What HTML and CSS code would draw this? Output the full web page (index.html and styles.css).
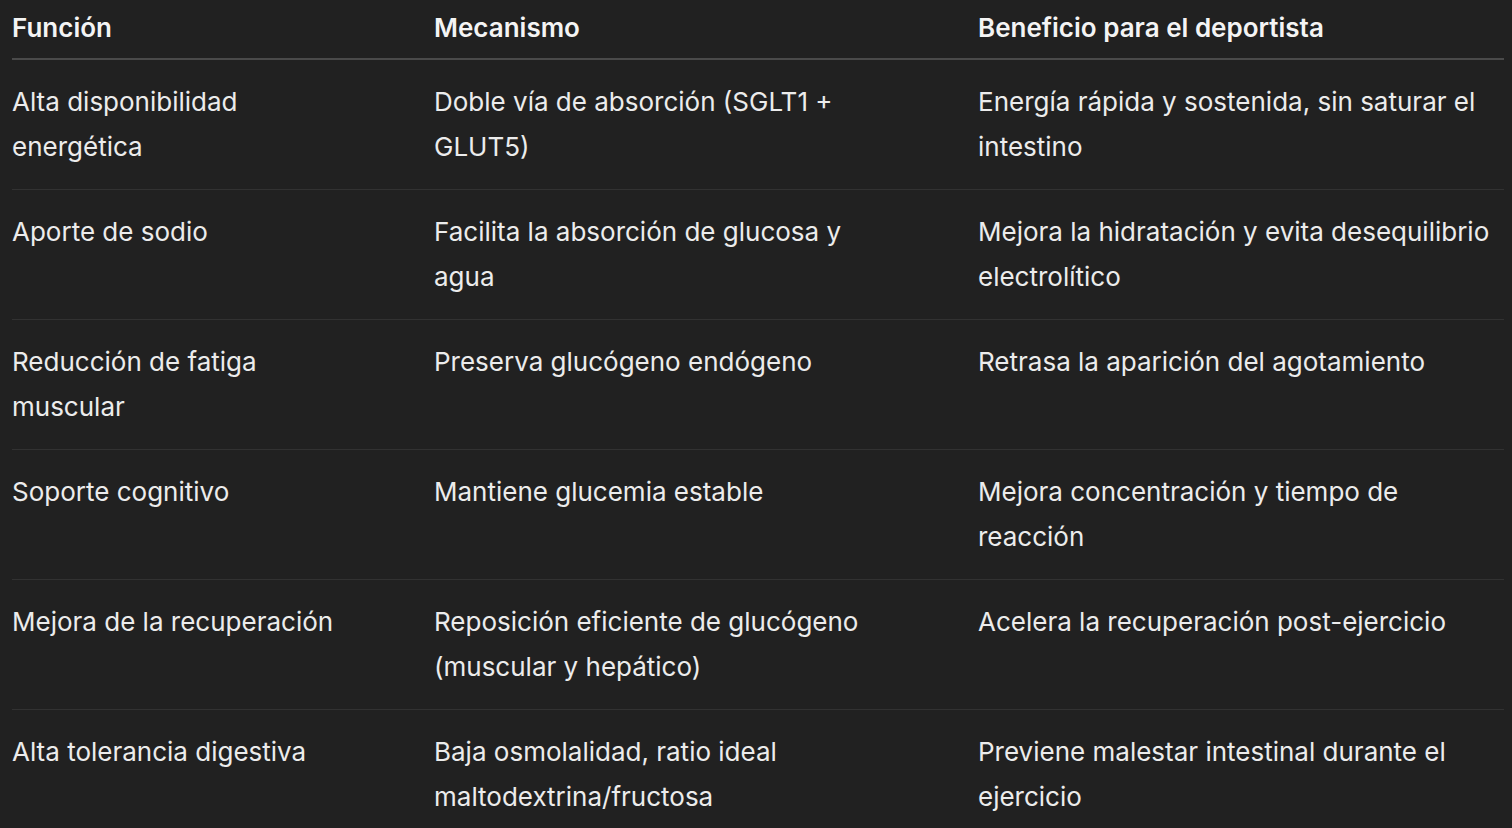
FILE: index.html
```html
<!DOCTYPE html>
<html lang="es">
<head>
    <meta charset="UTF-8">
    <meta name="viewport" content="width=device-width, initial-scale=1.0">
    <title>Funciones</title>
    <link rel="stylesheet" href="styles.css">
</head>
<body>
    <div class="table-wrap">
        <table class="info-table">
            <colgroup>
                <col class="col-fn">
                <col class="col-mech">
                <col class="col-benefit">
            </colgroup>
            <thead>
                <tr>
                    <th>Función</th>
                    <th>Mecanismo</th>
                    <th>Beneficio para el deportista</th>
                </tr>
            </thead>
            <tbody>
                <tr>
                    <td>Alta disponibilidad energética</td>
                    <td>Doble vía de absorción (SGLT1 + GLUT5)</td>
                    <td>Energía rápida y sostenida, sin saturar el intestino</td>
                </tr>
                <tr>
                    <td>Aporte de sodio</td>
                    <td>Facilita la absorción de glucosa y agua</td>
                    <td>Mejora la hidratación y evita desequilibrio electrolítico</td>
                </tr>
                <tr>
                    <td>Reducción de fatiga muscular</td>
                    <td>Preserva glucógeno endógeno</td>
                    <td>Retrasa la aparición del agotamiento</td>
                </tr>
                <tr>
                    <td>Soporte cognitivo</td>
                    <td>Mantiene glucemia estable</td>
                    <td>Mejora concentración y tiempo de reacción</td>
                </tr>
                <tr>
                    <td>Mejora de la recuperación</td>
                    <td>Reposición eficiente de glucógeno (muscular y hepático)</td>
                    <td>Acelera la recuperación post-ejercicio</td>
                </tr>
                <tr>
                    <td>Alta tolerancia digestiva</td>
                    <td>Baja osmolalidad, ratio ideal maltodextrina/fructosa</td>
                    <td>Previene malestar intestinal durante el ejercicio</td>
                </tr>
            </tbody>
        </table>
    </div>
</body>
</html>
```

FILE: styles.css
```css
body {
    background-color: #212121;
    color: #ececec;
    font-family: Inter, "Noto Sans", sans-serif;
    margin: 0;
}
.table-wrap {
    padding: 0 8px 0 12px;
}
.info-table {
    width: 100%;
    border-collapse: collapse;
    table-layout: fixed;
    font-size: 26px;
    line-height: 45px;
}
.col-fn {
    width: 422px;
}
.col-mech {
    width: 544px;
}
.info-table th {
    text-align: left;
    font-weight: 600;
    color: #f4f4f4;
    padding: 5px 0 8px 0;
    border-bottom: 2px solid #4a4a4a;
}
.info-table td {
    text-align: left;
    vertical-align: top;
    padding: 19px 0 20px 0;
    border-bottom: 1px solid #323232;
}
.info-table td:nth-child(1) {
    padding-right: 77px;
}
.info-table td:nth-child(2) {
    padding-right: 94px;
}
```
